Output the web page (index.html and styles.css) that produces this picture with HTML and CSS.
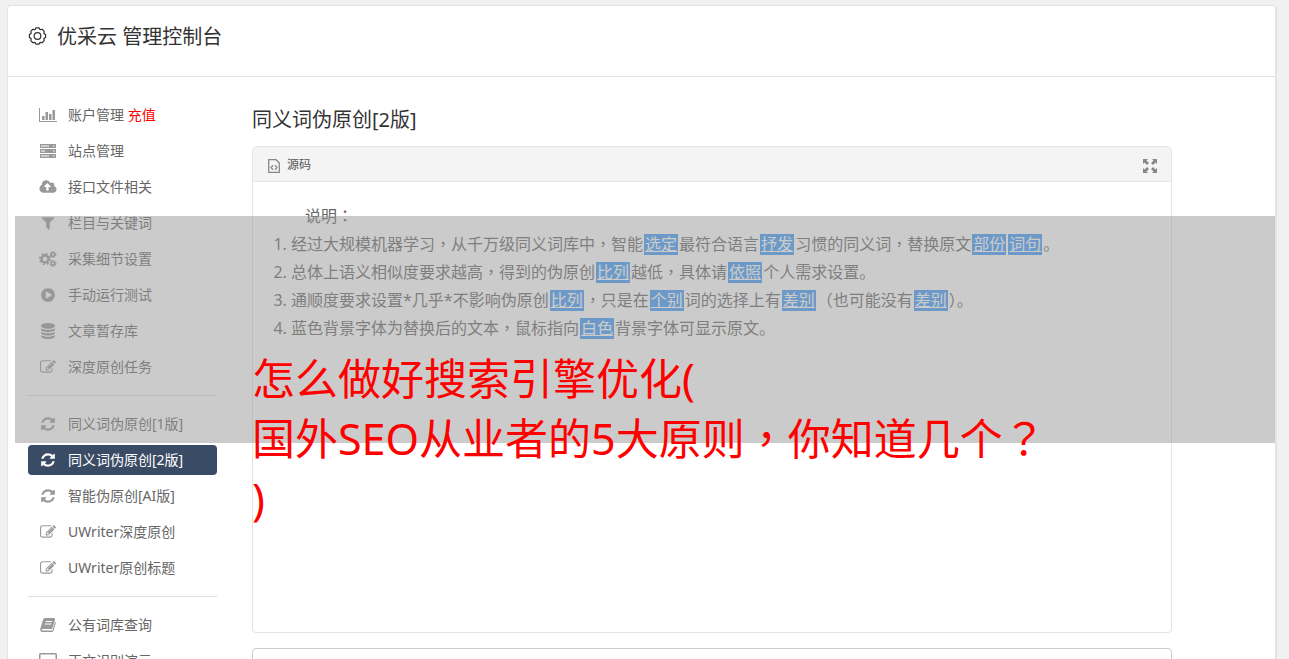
FILE: index.html
```html
<!DOCTYPE html>
<html lang="zh-CN">
<head>
<meta charset="utf-8">
<title>优采云 管理控制台</title>
<link rel="stylesheet" href="styles.css">
</head>
<body>
<svg class="sprite" aria-hidden="true">
  <symbol id="i-refresh" viewBox="0 0 1792 1792"><path d="M1639 1056q0 5-1 7-64 268-268 434.500t-478 166.500q-146 0-282.500-55t-243.500-157l-129 129q-19 19-45 19t-45-19-19-45v-448q0-26 19-45t45-19h448q26 0 45 19t19 45-19 45l-137 137q71 66 161 102t187 36q134 0 250-65t186-179q11-17 53-117 8-23 30-23h192q13 0 22.500 9.500t9.500 22.500zm25-800v448q0 26-19 45t-45 19h-448q-26 0-45-19t-19-45 19-45l138-138q-148-137-349-137-134 0-250 65t-186 179q-11 17-53 117-8 23-30 23h-199q-13 0-22.500-9.500t-9.500-22.500v-7q65-268 270-434.500t480-166.500q146 0 284 55.500t245 156.500l130-129q19-19 45-19t45 19 19 45z"/></symbol>
  <symbol id="i-edit" viewBox="0 0 1792 1792"><path d="M888 1184l116-116-152-152-116 116v56h96v96h56zm440-720q-16-16-33 1l-350 350q-17 17-1 33t33-1l350-350q17-17 1-33zm80 594v190q0 119-84.500 203.500t-203.500 84.500h-832q-119 0-203.500-84.500t-84.500-203.500v-832q0-119 84.500-203.500t203.500-84.500h832q63 0 117 25 15 7 18 23 3 17-9 29l-49 49q-14 14-32 8-23-6-45-6h-832q-66 0-113 47t-47 113v832q0 66 47 113t113 47h832q66 0 113-47t47-113v-126q0-13 9-22l64-64q15-15 35-7t20 29zm-96-738l288 288-672 672h-288v-288zm444 132l-92 92-288-288 92-92q28-28 68-28t68 28l152 152q28 28 28 68t-28 68z"/></symbol>
  <symbol id="i-filter" viewBox="0 0 1792 1792"><path d="M1595 295q17 41-14 70l-493 493v742q0 42-39 59-13 5-25 5-27 0-45-19l-256-256q-19-19-19-45v-486l-493-493q-31-29-14-70 17-39 59-39h1280q42 0 59 39z"/></symbol>
  <symbol id="i-play" viewBox="0 0 1792 1792"><path d="M896 128q209 0 385.500 103t279.500 279.500 103 385.500-103 385.500-279.500 279.500-385.500 103-385.500-103-279.500-279.500-103-385.500 103-385.500 279.500-279.500 385.500-103zm384 823q32-18 32-55t-32-55l-544-320q-31-19-64-1-32 19-32 56v640q0 37 32 56 16 8 32 8 17 0 32-9z"/></symbol>
  <symbol id="i-cloud" viewBox="-64 0 1920 1792"><path d="M1216 864q0-14-9-23l-352-352q-9-9-23-9t-23 9l-351 351q-10 12-10 24 0 14 9 23t23 9h224v352q0 13 9.500 22.500t22.500 9.500h192q13 0 22.500-9.500t9.500-22.500v-352h224q13 0 22.500-9.500t9.500-22.500zm640 288q0 159-112.500 271.500t-271.500 112.500h-1088q-185 0-316.500-131.500t-131.500-316.500q0-130 70-240t188-165q-2-30-2-43 0-212 150-362t362-150q156 0 285.500 87t188.500 231q71-62 166-62 106 0 181 75t75 181q0 76-41 138 130 31 213.500 135.500t83.500 238.500z"/></symbol>
  <symbol id="i-database" viewBox="0 0 1792 1792"><path d="M896 768q237 0 443-43t325-127v170q0 69-103 128t-280 93.500-385 34.500-385-34.500-280-93.500-103-128v-170q119 84 325 127t443 43zm0 768q237 0 443-43t325-127v170q0 69-103 128t-280 93.500-385 34.500-385-34.500-280-93.500-103-128v-170q119 84 325 127t443 43zm0-384q237 0 443-43t325-127v170q0 69-103 128t-280 93.500-385 34.500-385-34.500-280-93.500-103-128v-170q119 84 325 127t443 43zm0-1152q208 0 385 34.500t280 93.500 103 128v128q0 69-103 128t-280 93.500-385 34.500-385-34.500-280-93.500-103-128v-128q0-69 103-128t280-93.500 385-34.500z"/></symbol>
  <symbol id="i-chart" viewBox="0 0 18 16"><path d="M0 1h1v13h17v1H0zM3 9h2.500v4H3zM6.500 5H9v8H6.500zM10 7h2.500v6H10zM13.500 3H16v10h-2.500z"/></symbol>
  <symbol id="i-server" viewBox="0 0 18 16"><path fill-rule="evenodd" d="M1 1h16v4H1zM1 6h16v4H1zM1 11h16v4H1zM2 2.500v1h8v-1zM2 7.500v1h4v-1zM2 12.500v1h8v-1zM14 2.500v1h1.500v-1zM14 7.500v1h1.500v-1zM14 12.500v1h1.500v-1z"/></symbol>
  <symbol id="i-cogs" viewBox="0 0 18 16"><g fill="none" stroke="currentColor"><circle cx="6" cy="8" r="3.500" stroke-width="2.400"/><circle cx="6" cy="8" r="5.200" stroke-width="1.800" stroke-dasharray="2.040 2.040"/><circle cx="14" cy="3.500" r="1.800" stroke-width="1.500"/><circle cx="14" cy="3.500" r="2.800" stroke-width="1.200" stroke-dasharray="1.260 1"/><circle cx="14" cy="12.500" r="1.800" stroke-width="1.500"/><circle cx="14" cy="12.500" r="2.800" stroke-width="1.200" stroke-dasharray="1.260 1"/></g></symbol>
  <symbol id="i-book" viewBox="0 0 18 16"><path fill-rule="evenodd" d="M6 1h9q1.300 0 1 1.500L13.500 11q-.3 1-1.300 1H4q-1.300 0-1.300.8t1.300.7h9.500L16 4.500q1 .6.700 1.700L14.400 14q-.3 1-1.400 1H3.500Q1 15 1.200 12L4 2.800Q4.500 1 6 1zM6.800 4l-.3 1h6.500l.3-1zM6 6.500l-.3 1h6.500l.3-1z"/></symbol>
  <symbol id="i-desktop" viewBox="0 0 18 16"><path fill-rule="evenodd" d="M1.500 0h15Q18 0 18 1.500v10q0 1.500-1.500 1.500H11v2h2v1H5v-1h2v-2H1.500Q0 13 0 11.500v-10Q0 0 1.500 0zM1.500 1.500v8h15v-8z"/></symbol>
</svg>
<div class="page">
  <div class="panel">
    <header class="panel-head">
      <svg class="gear" viewBox="-10 -10 20 20" aria-hidden="true"><path d="M-1.600-8.500H1.600L2.500-6.900 3.100-6.650 4.900-7.100 7.100-4.900 6.650-3.100 6.900-2.500 8.500-1.600V1.600L6.900 2.500 6.650 3.100 7.100 4.900 4.900 7.100 3.100 6.650 2.500 6.900 1.600 8.500H-1.600L-2.500 6.900-3.100 6.650-4.900 7.100-7.100 4.900-6.650 3.100-6.900 2.500-8.500 1.600V-1.600L-6.900-2.500-6.650-3.100-7.100-4.900-4.900-7.100-3.100-6.650-2.500-6.900z"/><circle r="3.500"/></svg>
      <h1 class="title">优采云 管理控制台</h1>
    </header>
    <div class="columns">
      <nav class="side">
        <a class="item" href="#"><svg class="icon"><use href="#i-chart"/></svg><span>账户管理 <span class="pay">充值</span></span></a>
        <a class="item" href="#"><svg class="icon"><use href="#i-server"/></svg>站点管理</a>
        <a class="item" href="#"><svg class="icon"><use href="#i-cloud"/></svg>接口文件相关</a>
        <a class="item" href="#"><svg class="icon"><use href="#i-filter"/></svg>栏目与关键词</a>
        <a class="item" href="#"><svg class="icon"><use href="#i-cogs"/></svg>采集细节设置</a>
        <a class="item" href="#"><svg class="icon"><use href="#i-play"/></svg>手动运行测试</a>
        <a class="item" href="#"><svg class="icon"><use href="#i-database"/></svg>文章暂存库</a>
        <a class="item" href="#"><svg class="icon"><use href="#i-edit"/></svg>深度原创任务</a>
        <hr class="rule">
        <a class="item" href="#"><svg class="icon"><use href="#i-refresh"/></svg>同义词伪原创[1版]</a>
        <a class="item active" href="#" aria-current="page"><svg class="icon"><use href="#i-refresh"/></svg>同义词伪原创[2版]</a>
        <a class="item" href="#"><svg class="icon"><use href="#i-refresh"/></svg>智能伪原创[AI版]</a>
        <a class="item" href="#"><svg class="icon"><use href="#i-edit"/></svg>UWriter深度原创</a>
        <a class="item" href="#"><svg class="icon"><use href="#i-edit"/></svg>UWriter原创标题</a>
        <hr class="rule">
        <a class="item" href="#"><svg class="icon"><use href="#i-book"/></svg>公有词库查询</a>
        <a class="item" href="#"><svg class="icon"><use href="#i-desktop"/></svg>正文识别演示</a>
      </nav>
      <main class="content">
        <h2 class="heading">同义词伪原创[2版]</h2>
        <section class="editor">
          <div class="toolbar">
            <button class="tool" type="button">
              <svg class="doc" viewBox="0 0 12 14" aria-hidden="true"><path d="M.7.700h7.300l3.300 3.300v9.300H.7zM5 6.200L3 8.500l2 2.300M7 6.200l2 2.300-2 2.300"/></svg>源码
            </button>
            <button class="tool" type="button" aria-label="全屏">
              <svg class="expand" viewBox="0 0 14 14" aria-hidden="true"><path d="M0 0h5L3.500 1.500 6 4 4 6 1.500 3.500 0 5zM14 0v5l-1.500-1.500L10 6 8 4l2.500-2.500L9 0zM0 14V9l1.500 1.500L4 8l2 2-2.500 2.500L5 14zM14 14H9l1.500-1.500L8 10l2-2 2.500 2.500L14 9z"/></svg>
            </button>
          </div>
          <div class="doc-body">
            <p class="lead">说明<span class="mid" lang="zh-Hant">：</span></p>
            <ol class="notes">
              <li>经过大规模机器学习<span class="mid" lang="zh-Hant">，</span>从千万级同义词库中<span class="mid" lang="zh-Hant">，</span>智能<u class="swap">选定</u>最符合语言<u class="swap">抒发</u>习惯的同义词<span class="mid" lang="zh-Hant">，</span>替换原文<u class="swap">部份</u><u class="swap">词句</u>。</li>
              <li>总体上语义相似度要求越高<span class="mid" lang="zh-Hant">，</span>得到的伪原创<u class="swap">比列</u>越低<span class="mid" lang="zh-Hant">，</span>具体请<u class="swap">依照</u>个人需求设置。</li>
              <li>通顺度要求设置*几乎*不影响伪原创<u class="swap">比列</u><span class="mid" lang="zh-Hant">，</span>只是在<u class="swap">个别</u>词的选择上有<u class="swap">差别</u>（也可能没有<u class="swap">差别</u><span class="mid" lang="zh-Hant">）</span>。</li>
              <li>蓝色背景字体为替换后的文本<span class="mid" lang="zh-Hant">，</span>鼠标指向<u class="swap">白色</u>背景字体可显示原文。</li>
            </ol>
          </div>
        </section>
        <textarea class="output" aria-label="输出"></textarea>
      </main>
    </div>
  </div>
  <div class="shade"></div>
  <p class="caption">怎么做好搜索引擎优化(<br>国外SEO从业者的5大原则<span class="mid" lang="zh-Hant">，</span>你知道几个<span class="mid" lang="zh-Hant">？</span><br>)</p>
</div>
</body>
</html>
```
FILE: styles.css
```css
* {
  box-sizing: border-box;
}

body {
  margin: 0;
  background: #f1f1f1;
  color: #666;
  font-family: "Noto Sans", "Noto Sans CJK SC", sans-serif;
  font-size: 14px;
}

.sprite {
  position: absolute;
  width: 0;
  height: 0;
}

.page {
  position: relative;
  height: 100vh;
  overflow: hidden;
  padding: 5px 12px 0 7px;
}

.panel {
  background: #fff;
  border: 1px solid #e3e3e3;
  border-right-width: 2px;
  border-radius: 4px;
}

.panel-head {
  display: flex;
  align-items: flex-start;
  gap: 10px;
  height: 71px;
  padding: 16px 20px;
  border-bottom: 1px solid #e3e3e3;
}

.gear {
  width: 19px;
  height: 20px;
  margin-top: 4px;
  fill: none;
  stroke: #333;
  stroke-width: 1.3;
  stroke-linejoin: round;
}

.title,
.heading {
  margin: 0;
  color: #333;
  font-size: 20px;
  font-weight: 400;
  line-height: 30px;
}

.columns {
  display: flex;
  gap: 35px;
  padding: 23px 103px 0 20px;
}

.side {
  display: flex;
  flex: none;
  flex-direction: column;
  gap: 6px;
  width: 189px;
}

.item {
  display: flex;
  align-items: center;
  gap: 11px;
  height: 30px;
  padding-left: 11px;
  border-radius: 4px;
  color: #666;
  line-height: 30px;
  text-decoration: none;
}

.icon {
  flex: none;
  width: 18px;
  height: 16px;
  color: #999;
  fill: currentColor;
}

.active {
  background: #3a4b66;
  color: #fff;
}

.active .icon {
  color: #fff;
}

.pay {
  color: #f00;
}

.rule {
  width: 100%;
  margin: 7px 0;
  border: 0;
  border-top: 1px solid #ddd;
}

.content {
  flex: 1;
  min-width: 0;
  padding-top: 5px;
}

.editor {
  min-height: 487px;
  margin-top: 11px;
  border: 1px solid #e5e5e5;
  border-radius: 4px;
}

.toolbar {
  display: flex;
  align-items: center;
  justify-content: space-between;
  height: 35px;
  padding: 0 14px 0 15px;
  background: #f4f4f4;
  border-bottom: 1px solid #e5e5e5;
}

.tool {
  display: flex;
  align-items: center;
  gap: 7px;
  padding: 0;
  border: 0;
  background: none;
  color: #555;
  font-family: inherit;
  font-size: 12px;
}

.doc {
  width: 12px;
  height: 14px;
  margin-top: 4px;
  fill: none;
  stroke: #888;
  stroke-width: 1.3;
}

.expand {
  width: 14px;
  height: 14px;
  margin-top: 4px;
  fill: #888;
}

.doc-body {
  padding: 20px;
  font-size: 16px;
  line-height: 28px;
}

.lead {
  margin: 0;
  padding-left: 32px;
}

.notes {
  margin: 0;
  padding-left: 18px;
}

.mid {
  font-family: "Noto Sans CJK TC", sans-serif;
  line-height: 1;
}

.swap {
  display: inline-block;
  height: 21px;
  margin: 0 1px;
  padding: 0 1px;
  background: #419bf7;
  color: #fff;
  line-height: 20px;
}

.output {
  display: block;
  width: 100%;
  height: 120px;
  margin-top: 15px;
  border: 1px solid #ccc;
  border-radius: 4px;
  resize: none;
}

.shade {
  position: absolute;
  top: 216px;
  right: 14px;
  left: 15px;
  height: 227px;
  background: rgba(151, 151, 151, 0.5);
}

.caption {
  position: absolute;
  top: 349px;
  left: 252px;
  margin: 0;
  color: #f00;
  font-size: 43px;
  line-height: 60px;
  white-space: nowrap;
}
```
